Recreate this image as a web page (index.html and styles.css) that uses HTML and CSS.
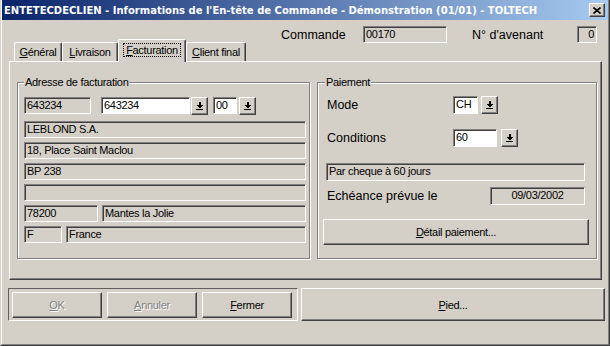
FILE: index.html
```html
<!DOCTYPE html>
<html lang="fr">
<head>
  <meta charset="UTF-8">
  <meta name="viewport" content="width=device-width, initial-scale=1.0">
  <title>Informations de l'En-tête de Commande</title>
  <link rel="stylesheet" href="styles.css">
</head>
<body>
  <div class="window">
    <div class="frame">
      <div class="titlebar">
        <span class="title">ENTETECDECLIEN - Informations de l'En-tête de Commande - Démonstration (01/01) - TOLTECH</span>
        <span class="close-btn">
          <svg width="8" height="7" viewBox="0 0 8 7"><path d="M0.5 0.5L7.5 6.5M7.5 0.5L0.5 6.5" stroke="#000" stroke-width="1.6"/></svg>
        </span>
      </div>

      <div class="topbar">
        <div class="tabs">
          <span class="tab t-gen"><u>G</u>énéral</span>
          <span class="tab t-liv"><u>L</u>ivraison</span>
          <span class="tab tab-active t-fac"><span class="focus"><u>F</u>acturation</span></span>
          <span class="tab t-cli"><u>C</u>lient final</span>
        </div>
        <div class="header">
          <span class="big-lbl lbl-cmd">Commande</span>
          <span class="field w-cmd">00170</span>
          <span class="big-lbl lbl-av">N° d'avenant</span>
          <span class="field w-av">0</span>
        </div>
      </div>

      <div class="panel">
        <fieldset class="group group-adr">
          <legend>Adresse de facturation</legend>
          <div class="row row-first">
            <span class="field w-code">643234</span>
            <span class="field edit w-client">643234</span>
            <span class="drop-btn"><svg width="7" height="8" viewBox="0 0 7 8" shape-rendering="crispEdges"><rect x="2.5" y="0" width="2" height="3"/><path d="M0 3H7L3.5 6.5Z"/><rect x="0" y="7" width="7" height="1"/></svg></span>
            <span class="field edit w-suffix">00</span>
            <span class="drop-btn drop-last"><svg width="7" height="8" viewBox="0 0 7 8" shape-rendering="crispEdges"><rect x="2.5" y="0" width="2" height="3"/><path d="M0 3H7L3.5 6.5Z"/><rect x="0" y="7" width="7" height="1"/></svg></span>
          </div>
          <div class="row row-second"><span class="field grow">LEBLOND S.A.</span></div>
          <div class="row"><span class="field grow">18, Place Saint Maclou</span></div>
          <div class="row"><span class="field grow">BP 238</span></div>
          <div class="row"><span class="field grow"></span></div>
          <div class="row">
            <span class="field w-cp">78200</span>
            <span class="field grow">Mantes la Jolie</span>
          </div>
          <div class="row">
            <span class="field w-pays">F</span>
            <span class="field grow">France</span>
          </div>
        </fieldset>

        <fieldset class="group group-pay">
          <legend>Paiement</legend>
          <div class="pay-row row-mode">
            <span class="big-lbl pay-lbl">Mode</span>
            <span class="field edit w-mode">CH</span>
            <span class="drop-btn drop-mode"><svg width="7" height="8" viewBox="0 0 7 8" shape-rendering="crispEdges"><rect x="2.5" y="0" width="2" height="3"/><path d="M0 3H7L3.5 6.5Z"/><rect x="0" y="7" width="7" height="1"/></svg></span>
          </div>
          <div class="pay-row row-cond">
            <span class="big-lbl pay-lbl">Conditions</span>
            <span class="field edit w-cond">60</span>
            <span class="drop-btn drop-cond"><svg width="7" height="8" viewBox="0 0 7 8" shape-rendering="crispEdges"><rect x="2.5" y="0" width="2" height="3"/><path d="M0 3H7L3.5 6.5Z"/><rect x="0" y="7" width="7" height="1"/></svg></span>
          </div>
          <div class="field pay-desc">Par cheque à 60 jours</div>
          <div class="pay-row row-ech">
            <span class="big-lbl">Echéance prévue le</span>
            <span class="field w-date">09/03/2002</span>
          </div>
          <button class="btn btn-detail"><u>D</u>étail paiement...</button>
        </fieldset>
      </div>

      <div class="footer">
        <div class="btn-frame">
          <button class="btn" disabled><u>O</u>K</button>
          <button class="btn" disabled><u>A</u>nnuler</button>
          <button class="btn"><u>F</u>ermer</button>
        </div>
        <button class="btn btn-pied"><u>P</u>ied...</button>
      </div>
    </div>
  </div>
</body>
</html>
```

FILE: styles.css
```css
* {
  box-sizing: border-box;
}
body {
  margin: 0;
  background: #d4d0c8;
  font-family: "Liberation Sans", Arial, sans-serif;
  font-size: 11px;
  letter-spacing: -0.3px;
  color: #000;
}
.window {
  width: 610px;
  height: 346px;
  background: #d4d0c8;
  border: 1px solid;
  border-top: none;
  border-color: #d4d0c8 #404040 #404040 #d4d0c8;
}
.frame {
  height: 100%;
  border: 1px solid;
  border-top: none;
  border-color: #fff #808080 #808080 #fff;
}

/* barre de titre */
.titlebar {
  height: 20px;
  display: flex;
  align-items: center;
  background: linear-gradient(to right, #0a246a, #a6caf0);
  padding: 0 2px 0 2px;
}
.title {
  flex: 1;
  color: #fff;
  font-family: "DejaVu Sans", Verdana, sans-serif;
  font-weight: bold;
  font-size: 10px;
  letter-spacing: 0;
  white-space: nowrap;
}
.close-btn {
  width: 16px;
  height: 14px;
  display: flex;
  align-items: center;
  justify-content: center;
  background: #d4d0c8;
  border: 1px solid;
  border-color: #fff #404040 #404040 #fff;
  box-shadow: inset -1px -1px #808080;
  margin-right: 1px;
}

/* onglets + entete */
.topbar {
  height: 41px;
  display: flex;
  align-items: flex-end;
  padding: 0 11px 0 12px;
}
.tabs {
  display: flex;
  align-items: flex-end;
}
.tab {
  height: 19px;
  line-height: 17px;
  padding-top: 1px;
  text-align: center;
  border-top: 1px solid #fff;
  border-left: 1px solid #fff;
  border-right: 1px solid #404040;
  box-shadow: inset -1px 0 #808080;
  border-radius: 2px 2px 0 0;
}
.t-gen { width: 48px; }
.t-liv { width: 56px; }
.t-fac { width: 68px; }
.t-cli { width: 60px; }
.tab-active {
  height: 23px;
  margin-bottom: -1px;
  position: relative;
  z-index: 1;
  background: #d4d0c8;
  padding-top: 2px;
}
.focus {
  outline: 1px dotted #000;
  padding: 0 2px;
}
.header {
  align-self: flex-start;
  margin-left: auto;
  margin-top: 6px;
  display: flex;
  align-items: center;
}
.big-lbl {
  font-size: 12.5px;
  letter-spacing: 0;
  white-space: nowrap;
}
.lbl-cmd { width: 82px; }
.lbl-av { width: 105px; margin-left: 25px; }
.w-cmd { width: 84px; }
.w-av { width: 20px; text-align: right; }

/* champs */
.field {
  display: block;
  height: 17px;
  line-height: 15px;
  padding: 0 2px;
  white-space: nowrap;
  overflow: hidden;
  background: #d4d0c8;
  border: 1px solid;
  border-color: #808080 #fff #fff #808080;
  box-shadow: inset 1px 1px #404040;
}
.field.edit {
  background: #fff;
}
.grow { flex: 1; }
.drop-btn {
  width: 17px;
  height: 18px;
  display: flex;
  align-items: center;
  justify-content: center;
  background: #d4d0c8;
  border: 1px solid;
  border-color: #fff #404040 #404040 #fff;
  box-shadow: inset -1px -1px #808080;
}

/* panneau */
.panel {
  margin-left: 7px;
  width: 593px;
  height: 219px;
  display: flex;
  padding: 14px 0 0 7px;
  border: 1px solid;
  border-color: #fff #404040 #404040 #fff;
  box-shadow: inset -1px -1px #808080;
}
.group {
  margin: 0;
  min-width: 0;
  height: 183px;
  border: 1px solid #808080;
  box-shadow: 1px 1px 0 #fff, inset 1px 1px 0 #fff;
}
.group legend {
  margin-left: 0;
  padding: 0 1px;
  line-height: 13px;
  background: #d4d0c8;
}
.group-pay legend {
  margin-left: 2px;
}
.group-adr {
  width: 293px;
  padding: 0 3px 0 6px;
}
.group-pay {
  width: 280px;
  margin-left: 7px;
  padding: 0 7px 0 5px;
}
.row {
  display: flex;
  gap: 4px;
  margin-top: 4px;
}
.row-first {
  margin-top: 8px;
  gap: 0;
  align-items: flex-start;
}
.row-second { margin-top: 6px; }
.w-code { width: 67px; margin-right: 10px; }
.w-client { width: 89px; margin-right: 1px; }
.w-suffix { width: 24px; margin-left: 5px; margin-right: 2px; }
.w-cp { width: 74px; }
.w-pays { width: 38px; }

.pay-row {
  display: flex;
  align-items: center;
  height: 18px;
}
.pay-lbl {
  width: 126px;
  margin-left: 4px;
}
.row-mode { margin-top: 7px; }
.row-cond { margin-top: 15px; }
.pay-row .field { height: 18px; }
.w-mode { width: 25px; }
.drop-mode { margin-left: 3px; }
.w-cond { width: 44px; }
.drop-cond { margin-left: 4px; }
.pay-desc {
  height: 18px;
  width: 259px;
  margin: 16px 0 0 3px;
}
.row-ech {
  margin-top: 6px;
  padding-left: 4px;
}
.w-date {
  width: 95px;
  margin-left: auto;
  margin-right: 4px;
  text-align: center;
}

/* boutons */
.btn {
  font-family: "Liberation Sans", Arial, sans-serif;
  font-size: 11px;
  letter-spacing: -0.3px;
  color: #000;
  background: #d4d0c8;
  border: 1px solid;
  border-color: #fff #404040 #404040 #fff;
  box-shadow: inset -1px -1px #808080;
  padding: 0;
  height: 26px;
}
.btn:disabled {
  color: #808080;
  text-shadow: 1px 1px #fff;
}
.btn-detail {
  width: 100%;
  margin-top: 14px;
}
.footer {
  display: flex;
  margin: 8px 0 0 6px;
}
.btn-frame {
  width: 290px;
  height: 33px;
  display: flex;
  gap: 5px;
  padding: 3px 4px 2px 3px;
  border: 1px solid;
  border-color: #606060 #fff #fff #606060;
}
.btn-frame .btn {
  width: 90px;
}
.btn-pied {
  width: 304px;
  height: 33px;
  margin-left: 3px;
}
```
